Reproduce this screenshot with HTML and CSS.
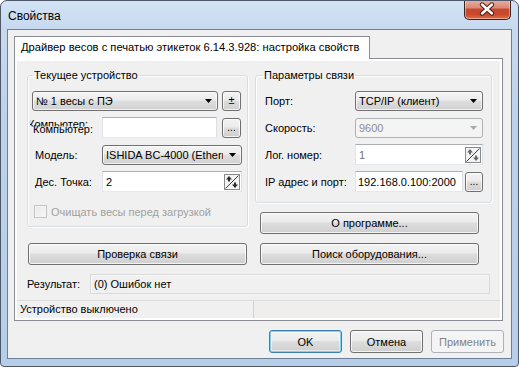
FILE: index.html
```html
<!DOCTYPE html>
<html>
<head>
<meta charset="UTF-8">
<title>Свойства</title>
<link rel="stylesheet" href="styles.css">
</head>
<body>
<div class="window">
	<div class="titlebar">
		<span class="title">Свойства</span>
		<span class="close">
			<svg width="45" height="18" viewBox="0 0 45 18">
				<path d="M17 4.5L27 13.5M27 4.5L17 13.5" stroke="#4a1c14" stroke-width="4.4" stroke-linecap="round"/>
				<path d="M17 4.5L27 13.5M27 4.5L17 13.5" stroke="#ffffff" stroke-width="2.4" stroke-linecap="round"/>
			</svg>
		</span>
	</div>
	<div class="client">
		<div class="tab">Драйвер весов с печатью этикеток 6.14.3.928: настройка свойств</div>
		<div class="panel">
			<div class="frame">
				<div class="columns">
					<div class="column col-left">
						<fieldset class="group group-device">
							<legend>Текущее устройство</legend>
							<div class="row">
								<div class="combo combo-device"><span class="value">№ 1 весы с ПЭ</span><svg class="arrow" width="7" height="4"><path d="M0 0h7L3.5 4z"/></svg></div>
								<div class="btn tiny">±</div>
							</div>
							<div class="row">
								<div class="caption caption-computer"><span class="ghost">Компьютер:</span>Компьютер:</div>
								<div class="edit edit-computer"></div>
								<div class="btn tiny dots">...</div>
							</div>
							<div class="row">
								<div class="caption">Модель:</div>
								<div class="combo combo-model"><span class="value">ISHIDA BC-4000 (Ethernet)</span><svg class="arrow" width="7" height="4"><path d="M0 0h7L3.5 4z"/></svg></div>
							</div>
							<div class="row">
								<div class="caption">Дес. Точка:</div>
								<div class="edit edit-point"><span class="value">2</span>
									<svg class="spin" width="16" height="16" viewBox="0 0 16 16">
										<rect x="0.5" y="0.5" width="15" height="15" fill="#f4f4f4" stroke="#8a8a8a"/>
										<path d="M1.5 14.5L14.5 1.5" stroke="#3a3a3a"/>
										<path d="M5 2L2 5.5h2v2h2v-2h2z" fill="#2a2a2a"/>
										<path d="M11 14l3-3.5h-2v-2h-2v2H8z" fill="#2a2a2a"/>
									</svg>
								</div>
							</div>
							<div class="check-row">
								<span class="checkbox"></span>
								<span class="check-text">Очищать весы перед загрузкой</span>
							</div>
						</fieldset>
						<div class="btn wide btn-test">Проверка связи</div>
					</div>
					<div class="column col-right">
						<fieldset class="group group-link">
							<legend>Параметры связи</legend>
							<div class="row">
								<div class="caption caption-wide">Порт:</div>
								<div class="combo combo-right"><span class="value">TCP/IP (клиент)</span><svg class="arrow" width="7" height="4"><path d="M0 0h7L3.5 4z"/></svg></div>
							</div>
							<div class="row">
								<div class="caption caption-wide">Скорость:</div>
								<div class="combo combo-right disabled"><span class="value">9600</span><svg class="arrow" width="7" height="4"><path d="M0 0h7L3.5 4z"/></svg></div>
							</div>
							<div class="row">
								<div class="caption caption-wide">Лог. номер:</div>
								<div class="edit edit-right"><span class="value grey">1</span>
									<svg class="spin" width="16" height="16" viewBox="0 0 16 16">
										<rect x="0.5" y="0.5" width="15" height="15" fill="#f4f4f4" stroke="#8a8a8a"/>
										<path d="M1.5 14.5L14.5 1.5" stroke="#3a3a3a"/>
										<path d="M5 2L2 5.5h2v2h2v-2h2z" fill="#6a6a6a"/>
										<path d="M11 14l3-3.5h-2v-2h-2v2H8z" fill="#6a6a6a"/>
									</svg>
								</div>
							</div>
							<div class="row">
								<div class="caption caption-wide">IP адрес и порт:</div>
								<div class="edit edit-ip"><span class="value">192.168.0.100:2000</span></div>
								<div class="btn tiny dots dots-ip">...</div>
							</div>
						</fieldset>
						<div class="btn wide btn-about">О программе...</div>
						<div class="btn wide btn-search">Поиск оборудования...</div>
					</div>
				</div>
				<div class="result-row">
					<div class="caption caption-result">Результат:</div>
					<div class="result-field">(0) Ошибок нет</div>
				</div>
				<div class="statusbar">
					<div class="status-panel status-main">Устройство выключено</div>
					<div class="status-panel status-rest"></div>
				</div>
			</div>
		</div>
		<div class="dialog-buttons">
			<div class="btn dialog default">OK</div>
			<div class="btn dialog">Отмена</div>
			<div class="btn dialog disabled">Применить</div>
		</div>
	</div>
</div>
</body>
</html>
```

FILE: styles.css
```css
body {
	margin: 0;
	padding: 0;
	background-color: #ffffff;
	font-family: "Liberation Sans", Arial, sans-serif;
	font-size: 11px;
	color: #000000;
}

.window {
	box-sizing: border-box;
	width: 519px;
	height: 367px;
	border: 1px solid #4e5868;
	border-radius: 7px 7px 4px 4px;
	background: linear-gradient(180deg, #d3e3f5 0px, #c6d9ef 28px, #bcd2eb 120px, #b7cee8 100%);
	overflow: hidden;
}

/* title bar */

.titlebar {
	display: flex;
	justify-content: space-between;
	align-items: flex-start;
	height: 28px;
}

.title {
	padding: 7px 0 0 7px;
	font-size: 12px;
	line-height: 16px;
	color: #000000;
}

.close {
	display: flex;
	box-sizing: border-box;
	width: 47px;
	height: 20px;
	margin: -1px 7px 0 0;
	border: 1px solid #3b2320;
	border-top: none;
	border-radius: 0 0 5px 5px;
	background: linear-gradient(180deg, #eab0a3 0%, #d98a78 40%, #c7472f 50%, #c9472c 75%, #d9734f 100%);
	box-shadow: inset 0 0 0 1px rgba(255, 220, 210, 0.5);
}

/* client area */

.client {
	box-sizing: border-box;
	height: 330px;
	margin: 0 6px;
	padding: 6px 0 0 6px;
	border: 1px solid #6d7f98;
	background-color: #f0f0f0;
}

.tab {
	position: relative;
	z-index: 1;
	box-sizing: border-box;
	width: 356px;
	height: 23px;
	margin-bottom: -1px;
	padding-left: 6px;
	border: 1px solid #898c95;
	border-bottom: none;
	background-color: #ffffff;
	font-size: 11.2px;
	line-height: 21px;
	white-space: nowrap;
	overflow: hidden;
}

.panel {
	box-sizing: border-box;
	width: 489px;
	height: 263px;
	padding: 2px;
	border: 1px solid #898c95;
	background-color: #ffffff;
}

.frame {
	display: flex;
	flex-direction: column;
	box-sizing: border-box;
	height: 257px;
	padding: 8px 0 0 10px;
	background-color: #f0f0f0;
}

.columns {
	display: flex;
	gap: 7px;
}

.column {
	display: flex;
	flex-direction: column;
}

/* group boxes */

.group {
	box-sizing: border-box;
	margin: 0;
	border: 1px solid #d5dfe5;
	border-radius: 3px;
	box-shadow: inset 1px 1px 0 #ffffff, 1px 1px 0 #ffffff;
}

.group legend {
	padding: 0 1px;
	line-height: 13px;
}

.group-device {
	width: 221px;
	height: 158px;
	padding: 8px 5px 0 4px;
}

.group-device legend {
	margin-left: 1px;
}

.group-link {
	width: 237px;
	height: 134px;
	padding: 8px 8px 0 9px;
}

.group-link legend {
	margin-left: -2px;
}

.row {
	display: flex;
	align-items: center;
	height: 21px;
	margin-bottom: 6px;
}

.caption {
	flex: none;
	width: 67px;
	padding-left: 3px;
	white-space: nowrap;
}

.caption-computer {
	position: relative;
	width: 69px;
	padding-left: 1px;
	top: 1px;
}

.caption-computer .ghost {
	position: absolute;
	left: -4px;
	top: -5px;
	clip-path: inset(0 0 3px 2px);
}

.caption-wide {
	width: 90px;
	padding-left: 0;
}

/* combo boxes */

.combo {
	display: flex;
	align-items: center;
	box-sizing: border-box;
	height: 20px;
	padding: 0 5px 0 3px;
	border: 1px solid #707070;
	border-radius: 3px;
	background: linear-gradient(180deg, #f4f4f4 0%, #ebebeb 45%, #dedede 50%, #d0d0d0 100%);
	box-shadow: inset 0 0 0 1px rgba(255, 255, 255, 0.7);
	white-space: nowrap;
}

.combo .value {
	flex: 1;
	overflow: hidden;
}

.combo .arrow {
	flex: none;
	margin-left: 6px;
	fill: #000000;
}

.combo-device {
	width: 186px;
	margin-right: 4px;
}

.combo-model {
	width: 140px;
}

.combo-right {
	width: 128px;
}

.combo.disabled {
	border-color: #adb2b5;
	background: #f4f4f4;
	box-shadow: none;
	color: #8d8d8d;
}

.combo.disabled .arrow {
	fill: #a9a9a9;
}

/* edits */

.edit {
	display: flex;
	align-items: center;
	box-sizing: border-box;
	height: 21px;
	padding: 0 1px 0 3px;
	border: 1px solid;
	border-color: #abadb3 #dbdfe6 #e3e9ef #e2e3ea;
	background-color: #ffffff;
	white-space: nowrap;
}

.edit .value {
	flex: 1;
}

.edit .grey {
	color: #6d6d6d;
}

.edit-computer {
	width: 115px;
	margin-right: 5px;
}

.edit-point {
	width: 140px;
}

.edit-right {
	width: 128px;
}

.edit-ip {
	width: 108px;
	margin-right: 2px;
	padding-left: 2px;
}

/* buttons */

.btn {
	display: flex;
	align-items: center;
	justify-content: center;
	box-sizing: border-box;
	height: 22px;
	border: 1px solid #707070;
	border-radius: 3px;
	background: linear-gradient(180deg, #f3f3f3 0%, #ebebeb 45%, #dddddd 50%, #cfcfcf 100%);
	box-shadow: inset 0 0 0 1px rgba(255, 255, 255, 0.75);
	white-space: nowrap;
}

.tiny {
	width: 19px;
	height: 20px;
	padding-bottom: 1px;
}

.dots {
	align-items: flex-end;
	padding-bottom: 4px;
	font-size: 10px;
	line-height: 10px;
}

.dots-ip {
	width: 18px;
}

.wide {
	width: 219px;
}

.btn-test {
	margin-top: 16px;
	margin-left: 1px;
}

.btn-about {
	margin-top: 9px;
	margin-left: 5px;
}

.btn-search {
	margin-top: 9px;
	margin-left: 5px;
}

/* check box */

.check-row {
	display: flex;
	align-items: center;
	margin: 13px 0 0 2px;
	color: #a0a0a0;
}

.checkbox {
	box-sizing: border-box;
	width: 13px;
	height: 13px;
	margin-right: 4px;
	border: 1px solid #c4c4c4;
	background: linear-gradient(135deg, #e8e8e8, #f8f8f8);
	box-shadow: inset 0 0 0 1px #f4f4f4;
}

/* result and status */

.result-row {
	display: flex;
	align-items: center;
	margin-top: 9px;
	height: 20px;
}

.caption-result {
	width: 63px;
	padding-left: 0;
}

.result-field {
	box-sizing: border-box;
	width: 400px;
	height: 20px;
	padding-left: 3px;
	border: 1px solid #dadada;
	background-color: #f0f0f0;
	box-shadow: inset 1px 1px 0 #fafafa;
	line-height: 18px;
}

.statusbar {
	display: flex;
	margin: 6px 0 0 -10px;
	height: 18px;
	border-top: 1px solid #dcdcdc;
	box-sizing: border-box;
}

.status-panel {
	box-sizing: border-box;
	height: 17px;
	line-height: 17px;
	padding-left: 3px;
}

.status-main {
	width: 237px;
	border-right: 1px solid #d4d0cc;
	background-color: #f0f0f0;
}

.status-rest {
	flex: 1;
	background-color: #f0eeec;
}

/* dialog buttons */

.dialog-buttons {
	display: flex;
	justify-content: flex-end;
	gap: 8px;
	margin-top: 9px;
	padding-right: 7px;
}

.dialog {
	width: 73px;
	height: 23px;
}

.dialog.default {
	border-color: #3c7fb1;
	box-shadow: inset 0 0 0 1px #7fd0f5, inset 0 0 0 2px rgba(255, 255, 255, 0.5);
}

.dialog.disabled {
	border-color: #adb2b5;
	background: #f4f4f4;
	box-shadow: none;
	color: #838383;
}
```
